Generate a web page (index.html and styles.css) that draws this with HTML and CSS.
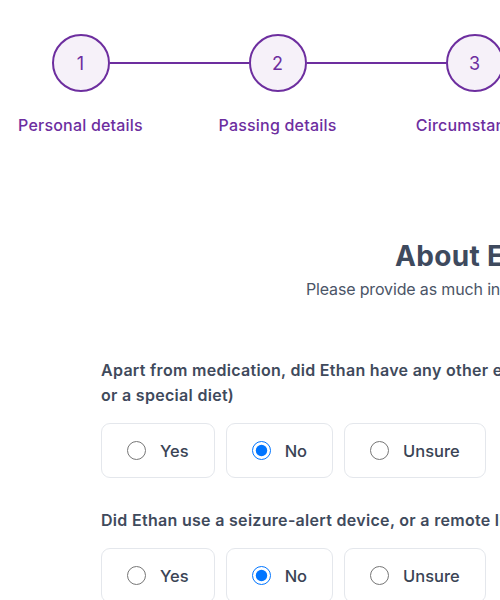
FILE: index.html
```html
<!DOCTYPE html>
<html lang="en">
<head>
<meta charset="utf-8">
<title>About Ethan</title>
<link rel="stylesheet" href="styles.css">
</head>
<body>
<div class="page">
  <ol class="stepper">
    <li class="step step-first">
      <div class="step-track"><span class="line"></span><span class="circle">1</span><span class="line"></span></div>
      <span class="step-label">Personal details</span>
    </li>
    <li class="step">
      <div class="step-track"><span class="line"></span><span class="circle">2</span><span class="line"></span></div>
      <span class="step-label">Passing details</span>
    </li>
    <li class="step">
      <div class="step-track"><span class="line"></span><span class="circle">3</span><span class="line"></span></div>
      <span class="step-label">Circumstances</span>
    </li>
    <li class="step step-last">
      <div class="step-track"><span class="line"></span><span class="circle">4</span><span class="line"></span></div>
      <span class="step-label">Review</span>
    </li>
  </ol>

  <main class="content">
    <h1 class="title">About Ethan</h1>
    <p class="subtitle">Please provide as much information as you can</p>

    <fieldset class="question">
      <legend class="q-text">Apart from medication, did Ethan have any other epilepsy treatments (like surgery, VNS<br>or a special diet)</legend>
      <div class="options">
        <label class="option"><input type="radio" name="q1"><span>Yes</span></label>
        <label class="option"><input type="radio" name="q1" checked><span>No</span></label>
        <label class="option"><input type="radio" name="q1"><span>Unsure</span></label>
      </div>
    </fieldset>

    <fieldset class="question">
      <legend class="q-text">Did Ethan use a seizure-alert device, or a remote listening monitor?</legend>
      <div class="options">
        <label class="option"><input type="radio" name="q2"><span>Yes</span></label>
        <label class="option"><input type="radio" name="q2" checked><span>No</span></label>
        <label class="option"><input type="radio" name="q2"><span>Unsure</span></label>
      </div>
    </fieldset>
  </main>
</div>
</body>
</html>
```
FILE: styles.css
```css
html, body {
  margin: 0;
  padding: 0;
  overflow: hidden;
  background: #ffffff;
}

body {
  font-family: "Inter", "Noto Sans", sans-serif;
  color: #3f4a5c;
}

.page {
  width: 1000px;
}

.stepper {
  list-style: none;
  margin: 0 0 0 -18px;
  padding: 34px 0 0 0;
  display: grid;
  grid-template-columns: repeat(4, 197px);
}

.step {
  display: flex;
  flex-direction: column;
  align-items: center;
}

.step-track {
  display: flex;
  align-items: center;
  width: 100%;
}

.line {
  flex: 1;
  height: 2px;
  background: #6d2e9f;
}

.step-first .line:first-child,
.step-last .line:last-child {
  background: transparent;
}

.circle {
  box-sizing: border-box;
  width: 58px;
  height: 58px;
  border-radius: 50%;
  border: 2px solid #6d2e9f;
  background: #f6f1f9;
  color: #6d2e9f;
  display: flex;
  align-items: center;
  justify-content: center;
  font-size: 18px;
  font-weight: 400;
}

.step-label {
  margin-top: 21px;
  font-size: 16px;
  line-height: 24px;
  color: #6d2e9f;
  font-weight: 500;
  letter-spacing: 0.2px;
  white-space: nowrap;
}

.content {
  margin-left: 101px;
  width: 760px;
}

.title {
  margin: 101px 0 0 0;
  text-align: center;
  font-size: 28px;
  line-height: 36px;
  font-weight: 700;
  color: #3e4a5e;
  letter-spacing: 0.3px;
}

.subtitle {
  margin: 3px 0 0 0;
  text-align: center;
  font-size: 16px;
  line-height: 24px;
  color: #4b5567;
  letter-spacing: -0.15px;
}

.question {
  border: 0;
  margin: 0;
  padding: 0;
  min-width: 0;
}

.question:first-of-type {
  margin-top: 57px;
}

.question + .question {
  margin-top: 30px;
}

.q-text {
  padding: 0;
  float: left;
  width: 100%;
  font-size: 16px;
  line-height: 25px;
  font-weight: 600;
  letter-spacing: 0.3px;
  color: #3f4a5c;
}

.options {
  clear: both;
  display: flex;
  gap: 11px;
  padding-top: 15px;
}

.option {
  box-sizing: border-box;
  height: 55px;
  display: flex;
  align-items: center;
  gap: 14px;
  padding: 0 25px;
  border: 1px solid #e4e7ec;
  border-radius: 9px;
  background: #ffffff;
  font-family: "Inter", sans-serif;
  font-weight: 500;
  font-size: 16.5px;
  color: #3a4455;
}

.option input {
  margin: 0;
  width: 19px;
  height: 19px;
}
```
